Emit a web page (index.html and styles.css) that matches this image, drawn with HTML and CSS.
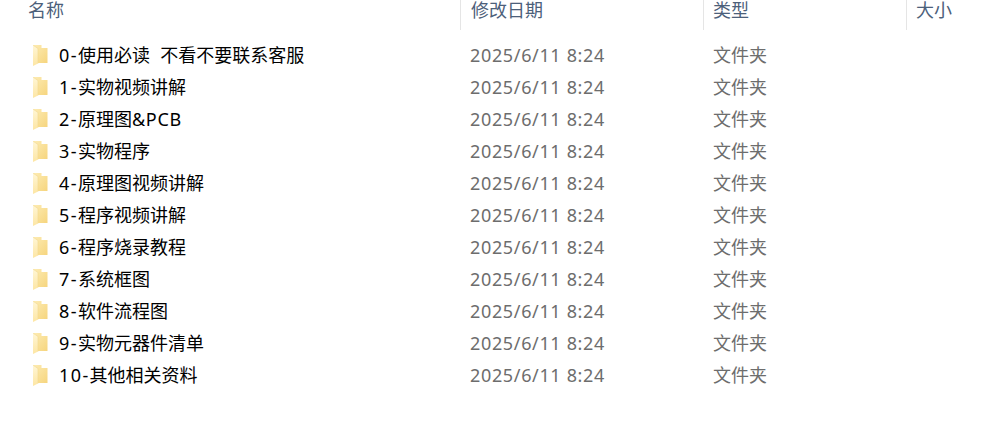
FILE: index.html
```html
<!DOCTYPE html>
<html lang="zh-CN">
<head>
    <meta charset="UTF-8">
    <title>文件列表</title>
    <link rel="stylesheet" href="styles.css">
</head>
<body>
    <svg class="defs" width="0" height="0">
        <defs>
            <linearGradient id="folderBody" x1="0" y1="0" x2="1" y2="1">
                <stop offset="0" stop-color="#fdecb4"/>
                <stop offset="1" stop-color="#f6d57e"/>
            </linearGradient>
            <linearGradient id="folderFlap" x1="0" y1="0" x2="0" y2="1">
                <stop offset="0" stop-color="#fff6d6"/>
                <stop offset="1" stop-color="#fde6a4"/>
            </linearGradient>
            <symbol id="folder" viewBox="0 0 15 21">
                <path d="M0 0H8.5V3H14.5V18H0Z" fill="url(#folderBody)"/>
                <path d="M0 0L5 3.5V18.5L0 21Z" fill="url(#folderFlap)"/>
                <path d="M0.2 0.2L5 3.5V18.5" fill="none" stroke="#f2d88f" stroke-width="0.6"/>
            </symbol>
        </defs>
    </svg>

    <!-- Header -->
    <div class="head">
        <div class="col-name">名称</div>
        <div class="col-date">修改日期</div>
        <div class="col-type">类型</div>
        <div class="col-size">大小</div>
    </div>

    <!-- Rows -->
    <div class="list">
        <div class="row"><div class="col-name"><svg class="icon"><use href="#folder"/></svg><span><span class="num">0-</span>使用必读<span class="gap">&nbsp;&nbsp;</span>不看不要联系客服</span></div><div class="col-date">2025/6/11 8:24</div><div class="col-type">文件夹</div></div>
        <div class="row"><div class="col-name"><svg class="icon"><use href="#folder"/></svg><span><span class="num">1-</span>实物视频讲解</span></div><div class="col-date">2025/6/11 8:24</div><div class="col-type">文件夹</div></div>
        <div class="row"><div class="col-name"><svg class="icon"><use href="#folder"/></svg><span><span class="num">2-</span>原理图<span class="latin">&amp;PCB</span></span></div><div class="col-date">2025/6/11 8:24</div><div class="col-type">文件夹</div></div>
        <div class="row"><div class="col-name"><svg class="icon"><use href="#folder"/></svg><span><span class="num">3-</span>实物程序</span></div><div class="col-date">2025/6/11 8:24</div><div class="col-type">文件夹</div></div>
        <div class="row"><div class="col-name"><svg class="icon"><use href="#folder"/></svg><span><span class="num">4-</span>原理图视频讲解</span></div><div class="col-date">2025/6/11 8:24</div><div class="col-type">文件夹</div></div>
        <div class="row"><div class="col-name"><svg class="icon"><use href="#folder"/></svg><span><span class="num">5-</span>程序视频讲解</span></div><div class="col-date">2025/6/11 8:24</div><div class="col-type">文件夹</div></div>
        <div class="row"><div class="col-name"><svg class="icon"><use href="#folder"/></svg><span><span class="num">6-</span>程序烧录教程</span></div><div class="col-date">2025/6/11 8:24</div><div class="col-type">文件夹</div></div>
        <div class="row"><div class="col-name"><svg class="icon"><use href="#folder"/></svg><span><span class="num">7-</span>系统框图</span></div><div class="col-date">2025/6/11 8:24</div><div class="col-type">文件夹</div></div>
        <div class="row"><div class="col-name"><svg class="icon"><use href="#folder"/></svg><span><span class="num">8-</span>软件流程图</span></div><div class="col-date">2025/6/11 8:24</div><div class="col-type">文件夹</div></div>
        <div class="row"><div class="col-name"><svg class="icon"><use href="#folder"/></svg><span><span class="num">9-</span>实物元器件清单</span></div><div class="col-date">2025/6/11 8:24</div><div class="col-type">文件夹</div></div>
        <div class="row"><div class="col-name"><svg class="icon"><use href="#folder"/></svg><span><span class="num">10-</span>其他相关资料</span></div><div class="col-date">2025/6/11 8:24</div><div class="col-type">文件夹</div></div>
    </div>
</body>
</html>
```

FILE: styles.css
```css
* { margin: 0; padding: 0; box-sizing: border-box; }
body { font-family: "Noto Sans", "Noto Sans CJK SC", sans-serif; font-size: 18px; background: #fff; color: #000; overflow: hidden; }
.defs { display: block; }

.col-name { width: 460px; flex: none; }
.col-date { width: 243px; flex: none; padding-left: 10px; }
.col-type { width: 203px; flex: none; padding-left: 9px; }
.col-size { flex: 1; padding-left: 9px; }

/* Header */
.head { display: flex; height: 30px; color: #4c607a; line-height: 20px; }
.head .col-name { padding-left: 28px; }
.head .col-date, .head .col-type, .head .col-size { border-left: 1px solid #e5e5e5; }

/* Rows */
.list { padding-top: 9px; }
.row { display: flex; height: 32px; line-height: 32px; }
.row .col-name { display: flex; align-items: center; padding-left: 33px; }
.row .col-date { color: #6d6d6d; letter-spacing: 0.65px; }
.row .col-type { color: #6d6d6d; padding-left: 10px; }
.num { letter-spacing: 1.4px; }
.latin { letter-spacing: 0.75px; }
.gap { letter-spacing: 0.5px; }
.icon { width: 15px; height: 21px; margin: 1px 11px 0 0; flex: none; }
```
